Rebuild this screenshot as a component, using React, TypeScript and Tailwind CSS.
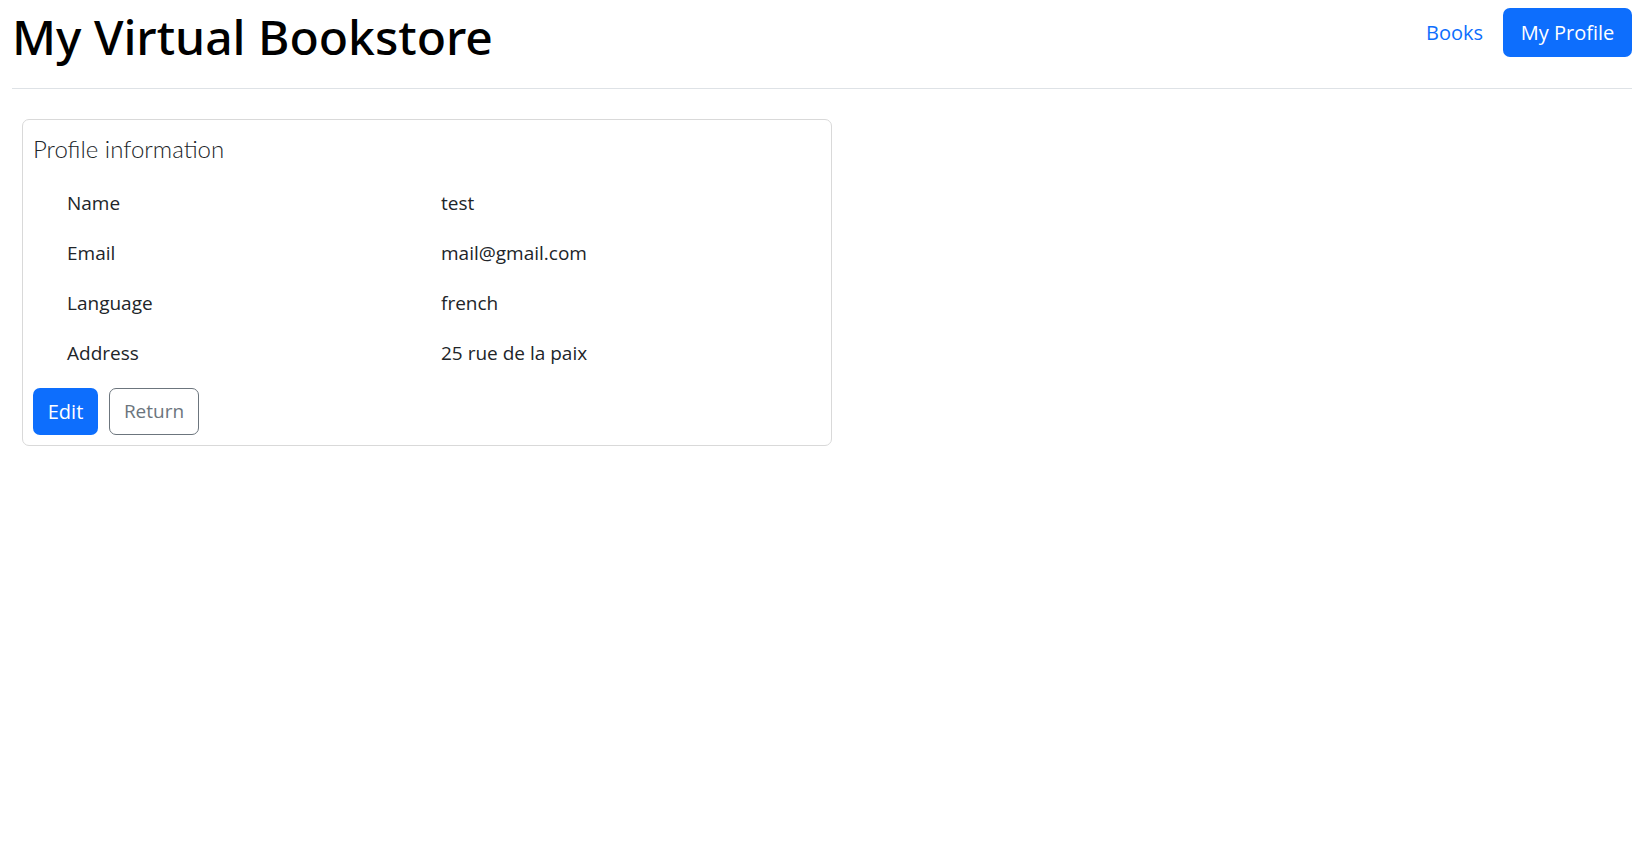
const rows = [
  { label: "Name", value: "test" },
  { label: "Email", value: "mail@gmail.com" },
  { label: "Language", value: "french" },
  { label: "Address", value: "25 rue de la paix" },
];

export default function App() {
  return (
    <div className="min-h-screen bg-white text-[#212529] font-['Open_Sans',sans-serif]">
      <header className="ml-3 mr-[15px] flex h-[89px] items-start justify-between border-b border-[#dee2e6]">
        <h1 className="mt-[7px] font-['Noto_Sans',sans-serif] text-[48px] font-medium leading-[60px] text-black">
          My Virtual Bookstore
        </h1>
        <nav className="mt-[8px] flex items-center">
          <a href="#" className="px-[10px] text-[20px] leading-[30px] text-[#0d6efd]">
            Books
          </a>
          <a
            href="#"
            className="ml-[10px] flex h-[49px] w-[129px] items-center justify-center rounded-[7px] bg-[#0d6efd] text-[20px] text-white"
          >
            My Profile
          </a>
        </nav>
      </header>

      <main className="pl-[22px] pt-[30px]">
        <section className="w-[810px] rounded-[7px] border border-[#d9d9d9] p-[10px]">
          <h4 className="h-[36px] font-['Lato',sans-serif] text-[24px] font-light leading-[38px] text-[#212529]">
            Profile information
          </h4>
          <div className="mt-[12px]">
            {rows.map((r) => (
              <div key={r.label} className="flex h-[50px] items-center text-[19px]">
                <span className="w-[408px] pl-[34px]">{r.label}</span>
                <span>{r.value}</span>
              </div>
            ))}
          </div>
          <div className="mt-[10px] flex gap-[11px]">
            <button className="flex h-[47px] w-[65px] items-center justify-center rounded-[7px] bg-[#0d6efd] text-[20px] text-white">
              Edit
            </button>
            <button className="flex h-[47px] w-[90px] items-center justify-center rounded-[7px] border border-[#6c757d] text-[19px] text-[#6c757d]">
              Return
            </button>
          </div>
        </section>
      </main>
    </div>
  );
}
